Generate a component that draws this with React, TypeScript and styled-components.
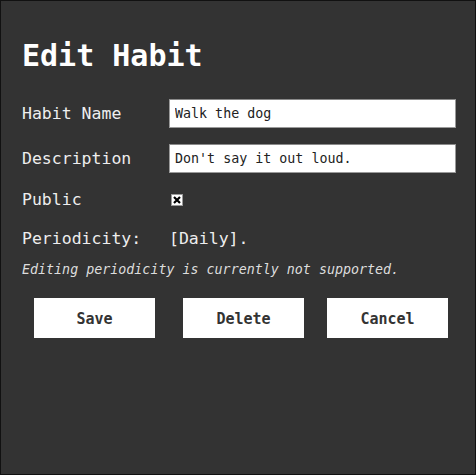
import styled, { createGlobalStyle } from 'styled-components';

const GlobalStyle = createGlobalStyle`
  html, body {
    margin: 0;
    padding: 0;
    background: #333;
  }
  * {
    box-sizing: border-box;
  }
`

const Page = styled.div`
  width: 476px;
  height: 475px;
  padding: 37px 20px 0 21px;
  border: 1px solid #111;
  background: #333;
  font-family: "DejaVu Sans Mono", "Liberation Mono", monospace;
  color: #eee;
`

const Title = styled.h1`
  margin: 0 0 26px;
  font-size: 30px;
  line-height: 35px;
  font-weight: 700;
  color: #fff;
`

const Row = styled.div<{ $space?: number }>`
  display: grid;
  grid-template-columns: 147px 1fr;
  align-items: center;
  min-height: 22px;
  margin-bottom: ${({ $space }) => $space ?? 16}px;
`

const Label = styled.label`
  font-size: 16.5px;
  line-height: 22px;
`

const Input = styled.input`
  display: block;
  width: 287px;
  height: 29px;
  padding: 0 5px;
  border: 1px solid #9a9a9a;
  border-top-color: #8a8a8a;
  background: #fff;
  font-family: "DejaVu Sans Mono", "Liberation Mono", monospace;
  font-size: 13.33px;
  color: #222;
  outline: none;
`

const CheckBox = styled.span`
  display: flex;
  align-items: center;
  justify-content: center;
  width: 12px;
  height: 12px;
  margin-left: 2px;
  border: 1px solid #9a9a9a;
  background: #fff;
`

const Value = styled.span`
  font-size: 16.5px;
  line-height: 22px;
`

const Note = styled.p`
  margin: 0 0 20px;
  font-size: 13.33px;
  line-height: 16px;
  font-style: italic;
  color: #ddd;
`

const Buttons = styled.div`
  display: flex;
  padding-left: 12px;
`

const Button = styled.button<{ $offset?: number }>`
  width: 121px;
  height: 40px;
  padding-top: 2px;
  margin-left: ${({ $offset }) => $offset ?? 0}px;
  border: none;
  background: #fff;
  font-family: "DejaVu Sans Mono", "Liberation Mono", monospace;
  font-size: 15px;
  font-weight: 700;
  color: #333;
  cursor: pointer;
`

export default function App() {
  return (
    <Page>
      <GlobalStyle />
      <Title>Edit Habit</Title>
      <Row>
        <Label>Habit Name</Label>
        <Input defaultValue="Walk the dog" />
      </Row>
      <Row>
        <Label>Description</Label>
        <Input defaultValue="Don't say it out loud." />
      </Row>
      <Row $space={17}>
        <Label>Public</Label>
        <CheckBox>
          <svg width="8" height="8" viewBox="0 0 8 8">
            <path d="M1 1 L7 7 M7 1 L1 7" stroke="#000" strokeWidth="2.2" />
          </svg>
        </CheckBox>
      </Row>
      <Row $space={12}>
        <Label>Periodicity:</Label>
        <Value>[Daily].</Value>
      </Row>
      <Note>Editing periodicity is currently not supported.</Note>
      <Buttons>
        <Button>Save</Button>
        <Button $offset={28}>Delete</Button>
        <Button $offset={23}>Cancel</Button>
      </Buttons>
    </Page>
  );
}
